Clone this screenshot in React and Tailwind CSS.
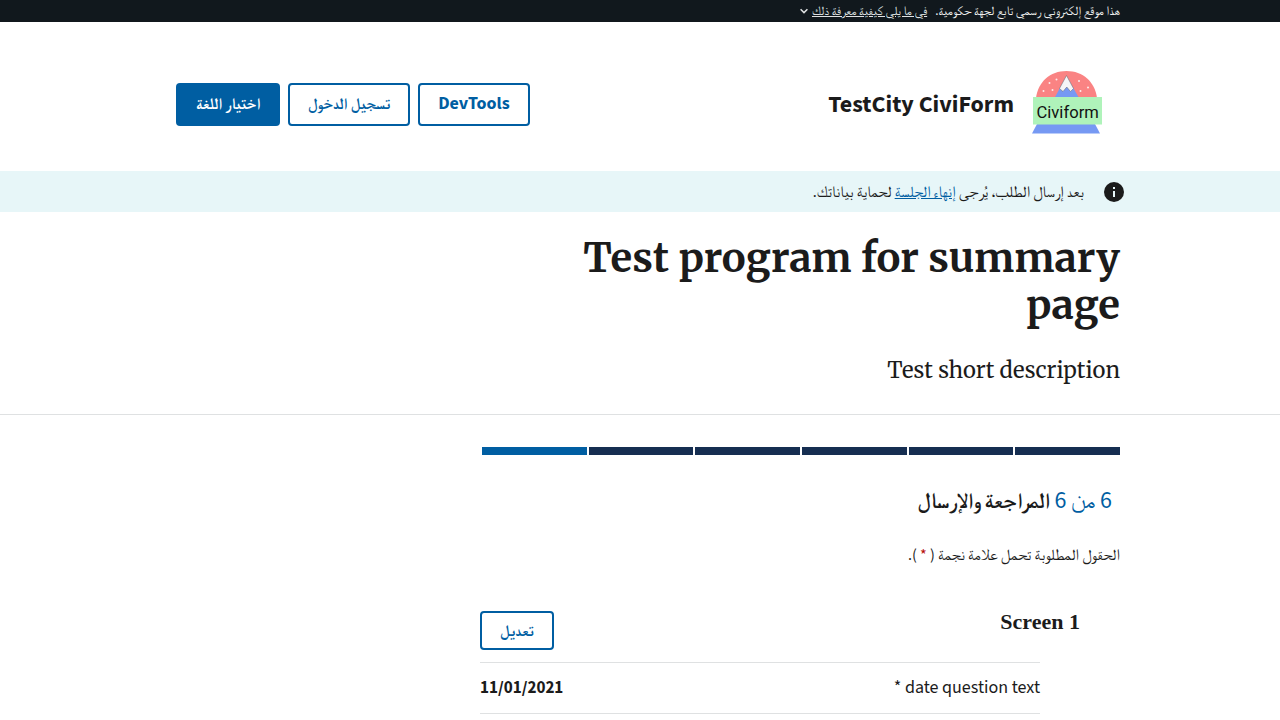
const steps = ['done', 'done', 'done', 'done', 'done', 'current'];

const stepColors = {
  done: 'bg-[#162e51]',
  current: 'bg-[#005ea2]',
};

function Logo() {
  return (
    <svg className="h-[68px] w-[74px]" viewBox="0 0 74 68" role="img" aria-label="Civiform">
      <path d="M6 28C8 12 20 1 36.500 1S65 12 67 28Z" fill="#fa8383" />
      <path d="M24.500 28 36.500 6 49 28Z" fill="#7699f3" />
      <path d="M36.500 5.500 43.500 18.500 40.500 21.500 36.800 17 33 21.500 29.500 18.500Z" fill="#f5f5f7" stroke="#666" strokeWidth=".5" />
      <g fill="#fff" opacity=".85">
        <circle cx="19.500" cy="13" r="1" />
        <circle cx="26.500" cy="9.500" r="1" />
        <circle cx="13.500" cy="21" r="1" />
        <circle cx="22.500" cy="20" r="1" />
        <circle cx="49" cy="11" r="1" />
        <circle cx="58" cy="17.500" r="1" />
        <circle cx="50.500" cy="21" r="1" />
      </g>
      <path d="M7 54H65L70 63.500H2Z" fill="#7699f3" />
      <rect x="3" y="27" width="69" height="27.500" fill="#aff3ba" />
      <text x="6.500" y="47.500" direction="ltr" textAnchor="start" fontFamily="Roboto, sans-serif" fontSize="16.600" fill="#111">
        Civiform
      </text>
    </svg>
  );
}

function OutlineButton({ children, className = '' }) {
  return (
    <button
      type="button"
      className={`rounded border-2 border-[#005ea2] bg-white px-[18px] leading-4 font-bold text-[#005ea2] ${className}`}
    >
      {children}
    </button>
  );
}

function Banner() {
  return (
    <section className="bg-[#11181d]" aria-label="هذا موقع إلكتروني رسمي">
      <div className="mx-auto flex h-[22px] max-w-[1024px] items-center gap-2 px-8 text-[13px] leading-4 text-[#f0f0f0]">
        <p>هذا موقع إلكتروني رسمي تابع لجهة حكومية.</p>
        <button type="button" className="flex items-center gap-1 text-[#dfe1e2]" aria-expanded="false">
          <span className="underline">في ما يلي كيفية معرفة ذلك</span>
          <svg className="size-2" viewBox="0 0 8 8" fill="none" stroke="currentColor" strokeWidth="1.500">
            <path d="m.6 2.200 3.400 3.400 3.400-3.400" />
          </svg>
        </button>
      </div>
    </section>
  );
}

function Header() {
  return (
    <header className="mx-auto flex max-w-[1024px] items-center justify-between px-12 pt-12 pb-[33px]">
      <a href="#" className="flex items-center gap-4 text-[#1b1b1b]">
        <Logo />
        <span className="pt-0.5 text-2xl font-bold" dir="ltr">TestCity CiviForm</span>
      </a>
      <div className="flex gap-2">
        <OutlineButton className="h-[43px] text-lg">DevTools</OutlineButton>
        <OutlineButton className="h-[43px] text-base">تسجيل الدخول</OutlineButton>
        <button type="button" className="h-[43px] rounded bg-[#005ea2] px-5 text-base leading-4 font-bold text-white">
          اختيار اللغة
        </button>
      </div>
    </header>
  );
}

function SessionAlert() {
  return (
    <section className="bg-[#e7f6f8]">
      <div className="mx-auto flex h-[41px] max-w-[1024px] items-center gap-5 px-7 text-base">
        <svg className="size-5" viewBox="0 0 20 20" aria-hidden="true">
          <circle cx="10" cy="10" r="10" fill="#1b1b1b" />
          <path d="M9 5h2v2H9zM9 9h2v6H9z" fill="#e7f6f8" />
        </svg>
        <p>
          بعد إرسال الطلب، يُرجى{' '}
          <a href="#" className="text-[#005ea2] underline">إنهاء الجلسة</a>
          {' '}لحماية بياناتك.
        </p>
      </div>
    </section>
  );
}

export default function App() {
  return (
    <div dir="rtl" lang="ar" className="min-h-screen bg-white font-['Source_Sans_3','FreeSerif','Noto_Naskh_Arabic','Noto_Sans_CJK_SC',sans-serif] text-[#1b1b1b]">
      <Banner />
      <Header />
      <SessionAlert />
      <div className="border-b border-[#dfe1e2] font-['Merriweather','Noto_Serif','Liberation_Serif',serif]">
        <div className="mx-auto max-w-[1024px] px-8 pt-[23px] pb-[27px]">
          <h1 className="max-w-[640px] text-[40px] leading-[47px] font-bold">Test program for summary page</h1>
          <p className="mt-6 text-[22px] leading-[34px]">Test short description</p>
        </div>
      </div>
      <main className="mx-auto max-w-[1024px] px-8 pt-8">
        <div className="max-w-[640px]">
          <div className="flex gap-0.5 pl-0.5" aria-hidden="true">
            {steps.map((step, i) => (
              <div key={i} className={`h-2 flex-1 ${stepColors[step]}`} />
            ))}
          </div>
          <h2 className="mt-8 px-2 text-[22px] leading-7 font-bold">
            <span className="text-2xl leading-7 font-normal text-[#005ea2]">6 من 6</span> المراجعة والإرسال
          </h2>
          <p className="mt-7 text-base">
            الحقول المطلوبة تحمل علامة نجمة (<span className="text-[#b50909]"> * </span>).
          </p>
          <section className="pt-11 pr-10">
            <div className="flex items-start justify-between">
              <h3 className="font-['Liberation_Serif',serif] text-[22px] leading-[22px] font-bold">Screen 1</h3>
              <OutlineButton className="h-[39px] text-base">تعديل</OutlineButton>
            </div>
            <dl className="mt-3 mr-10 border-t border-[#dfe1e2] leading-6">
              <div className="flex items-center justify-between border-b border-[#dfe1e2] py-[13px]">
                <dt className="text-lg leading-6">date question text *</dt>
                <dd className="text-[17px] leading-6 font-bold">11/01/2021</dd>
              </div>
            </dl>
          </section>
        </div>
      </main>
    </div>
  );
}
